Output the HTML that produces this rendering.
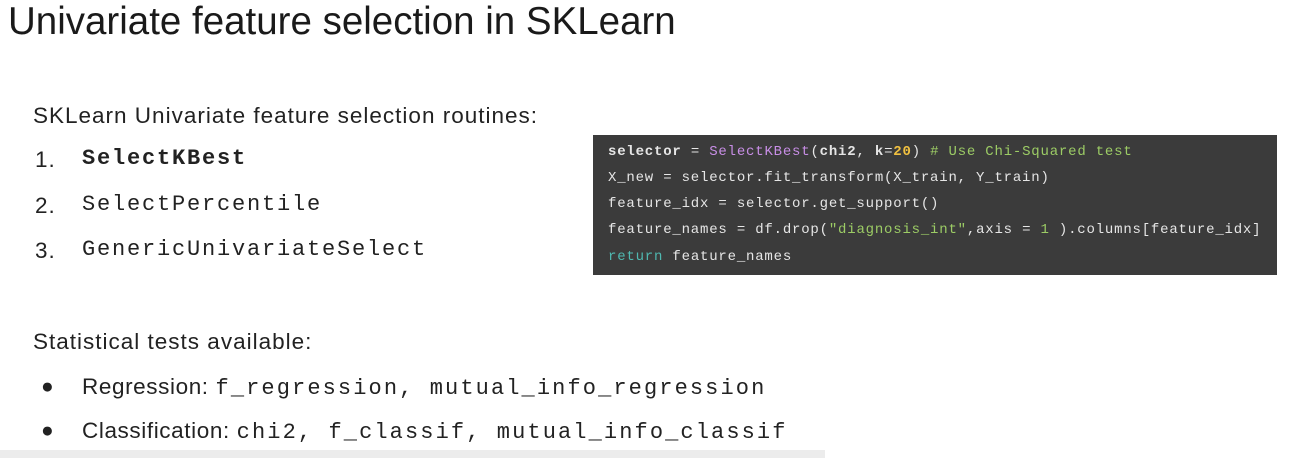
<!DOCTYPE html>
<html><head><style>
body{margin:0;width:1306px;height:458px;background:#fff;position:relative;overflow:hidden;font-family:"Liberation Sans",sans-serif;color:#222}
.a{position:absolute;white-space:nowrap}
.s{font-size:22.5px;letter-spacing:1.0px}
.m{font-family:"Liberation Mono",monospace;font-size:22px;letter-spacing:1.8px}
.b .m{letter-spacing:2.1px}
.b{letter-spacing:0.6px}
.code{position:absolute;left:593px;top:135px;width:684px;height:140px;background:#3b3b3b}
.code div{position:absolute;left:15px;font-family:"Liberation Mono",monospace;font-size:14px;letter-spacing:0.8px;color:#e6e6e6;white-space:nowrap}
.p{color:#c88ee6}.y{color:#f0c040}.g{color:#9ccc65}.t{color:#4fb8b0}
</style></head><body>
<div class="a" style="left:8px;top:0px;font-size:38.5px;color:#1a1a1a">Univariate feature selection in SKLearn</div>
<div class="a s" style="left:33px;top:103px">SKLearn Univariate feature selection routines:</div>
<div class="a s" style="left:35px;top:147px">1.</div><div class="a m" style="left:82px;top:146px;font-weight:bold">SelectKBest</div>
<div class="a s" style="left:35px;top:193px">2.</div><div class="a m" style="left:82px;top:192px">SelectPercentile</div>
<div class="a s" style="left:35px;top:238px">3.</div><div class="a m" style="left:82px;top:237px">GenericUnivariateSelect</div>
<div class="code">
<div style="top:9px"><b>selector</b> = <span class="p">SelectKBest</span>(<b>chi2</b>, <b>k</b>=<span class="y"><b>20</b></span>) <span class="g"># Use Chi-Squared test</span></div>
<div style="top:35px">X_new = selector.fit_transform(X_train, Y_train)</div>
<div style="top:61px">feature_idx = selector.get_support()</div>
<div style="top:87px">feature_names = df.drop(<span class="g">"diagnosis_int"</span>,axis = <span class="g">1</span> ).columns[feature_idx]</div>
<div style="top:114px"><span class="t">return</span> feature_names</div>
</div>
<div class="a s" style="left:33px;top:329px">Statistical tests available:</div>
<div class="a" style="left:41px;top:375px;font-size:21px">●</div>
<div class="a s b" style="left:82px;top:374px">Regression: <span class="m">f_regression, mutual_info_regression</span></div>
<div class="a" style="left:41px;top:419px;font-size:21px">●</div>
<div class="a s b" style="left:82px;top:418px">Classification: <span class="m">chi2, f_classif, mutual_info_classif</span></div>
<div class="a" style="left:0;top:450px;width:825px;height:8px;background:#ececec"></div>
</body></html>
